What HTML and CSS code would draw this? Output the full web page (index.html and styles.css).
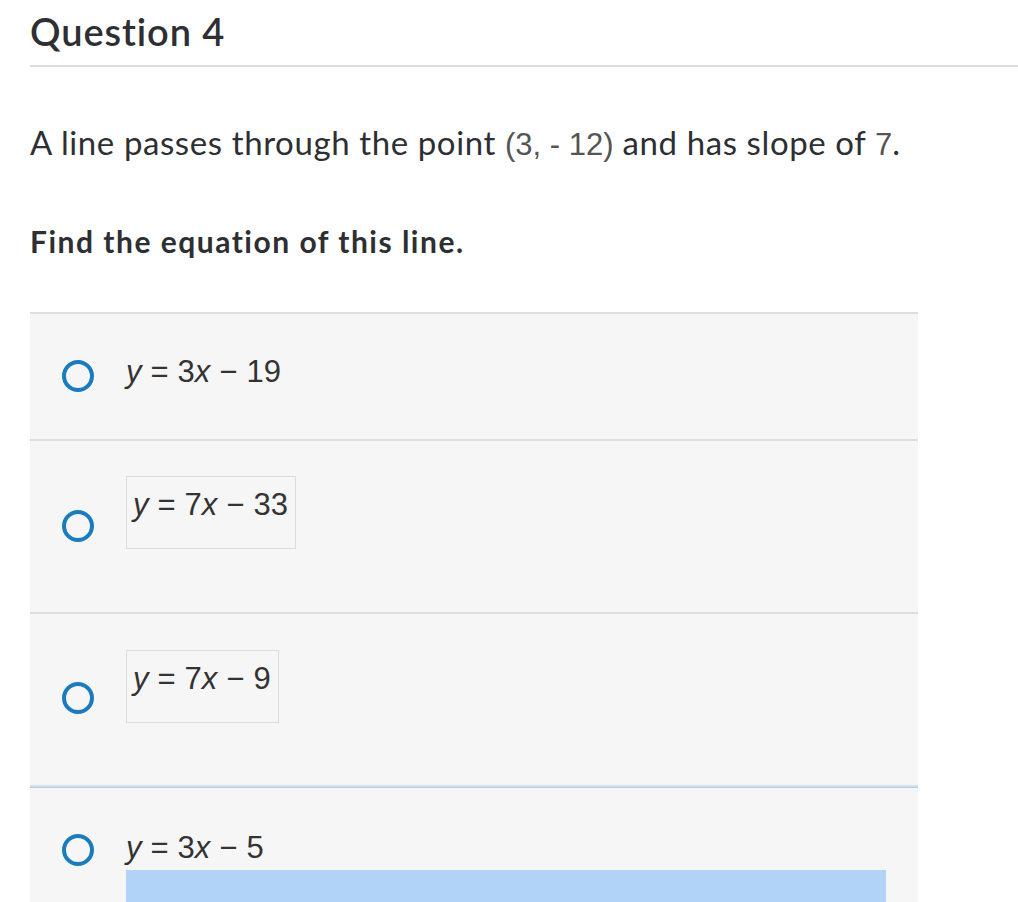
FILE: index.html
```html
<!DOCTYPE html>
<html>
<head>
<meta charset="utf-8">
<link rel="stylesheet" href="styles.css">
</head>
<body>
<div class="page">
  <header class="qhead">
    <h1 class="qtitle">Question 4</h1>
  </header>
  <p class="prompt">A line passes through the point <span class="m">(3, - 12)</span> and has slope of <span class="m">7</span>.</p>
  <p class="ask">Find the equation of this line.</p>

  <div class="options">
    <div class="opt opt-short">
      <span class="radio r1"></span>
      <div class="eq e1"><i>y</i><span class="op">=</span>3<i>x</i><span class="op">−</span>19</div>
    </div>
    <div class="opt opt-tall">
      <span class="radio r2"></span>
      <div class="eqbox b2"><div class="eq"><i>y</i><span class="op">=</span>7<i>x</i><span class="op">−</span>33</div></div>
    </div>
    <div class="opt opt-tall">
      <span class="radio r3"></span>
      <div class="eqbox b3"><div class="eq"><i>y</i><span class="op">=</span>7<i>x</i><span class="op">−</span>9</div></div>
    </div>
    <div class="opt opt-last">
      <span class="radio r4"></span>
      <div class="col4">
        <div class="eq e4"><i>y</i><span class="op">=</span>3<i>x</i><span class="op">−</span>5</div>
        <div class="sel"></div>
      </div>
    </div>
  </div>
</div>
</body>
</html>
```

FILE: styles.css
```css
html, body {
  margin: 0;
  padding: 0;
  background: #ffffff;
}
body {
  font-family: Lato, "Open Sans", sans-serif;
  color: #2d2f33;
  overflow: hidden;
}
.page {
  padding-left: 30px;
}
.qhead {
  padding-top: 9px;
  padding-bottom: 12px;
  border-bottom: 2px solid #dedde2;
}
.qtitle {
  margin: 0;
  font-size: 38px;
  line-height: 44px;
  font-weight: 600;
  letter-spacing: 0.9px;
  color: #2d2f33;
}
.prompt {
  margin: 55px 0 0 0;
  font-size: 33px;
  line-height: 40px;
  font-weight: 400;
  letter-spacing: 0.6px;
}
.m {
  font-family: "Liberation Sans", Arial, sans-serif;
  color: #555555;
  font-size: 31px;
  line-height: 0;
  letter-spacing: 0;
}
.ask {
  margin: 62px 0 0 0;
  font-size: 30px;
  line-height: 34px;
  font-weight: 700;
  letter-spacing: 1.5px;
}
.options {
  margin-top: 54px;
  width: 888px;
  background: #f6f6f6;
}
.opt {
  display: flex;
  align-items: flex-start;
  gap: 32px;
  padding-left: 32px;
  border-top: 2px solid #dedde2;
}
.opt-short { height: 125px; }
.opt-tall { height: 171px; }
.opt-last {
  height: 140px;
  box-shadow: inset 0 1px 0 #a9cdf3;
}
.radio {
  flex: none;
  width: 32px;
  height: 32px;
  box-sizing: border-box;
  border: 4px solid #1b7bbf;
  border-radius: 50%;
}
.r1 { margin-top: 46px; }
.r2 { margin-top: 69px; }
.r3 { margin-top: 68px; }
.r4 { margin-top: 47px; }
.eq {
  font-family: "Liberation Sans", Arial, sans-serif;
  font-size: 31px;
  line-height: 36px;
  color: #333333;
  white-space: nowrap;
}
.eq i { font-style: italic; }
.op { margin: 0 9px; }
.e1 { margin-top: 40px; }
.eqbox {
  border: 1px solid #dcdce0;
  padding: 10px 7px 25px 6px;
}
.b2 { margin-top: 35px; }
.b3 { margin-top: 36px; }
.col4 {
  display: flex;
  flex-direction: column;
  margin-top: 43px;
}
.sel {
  margin-top: 4px;
  width: 760px;
  height: 40px;
  background: #b1d3f8;
}
```
